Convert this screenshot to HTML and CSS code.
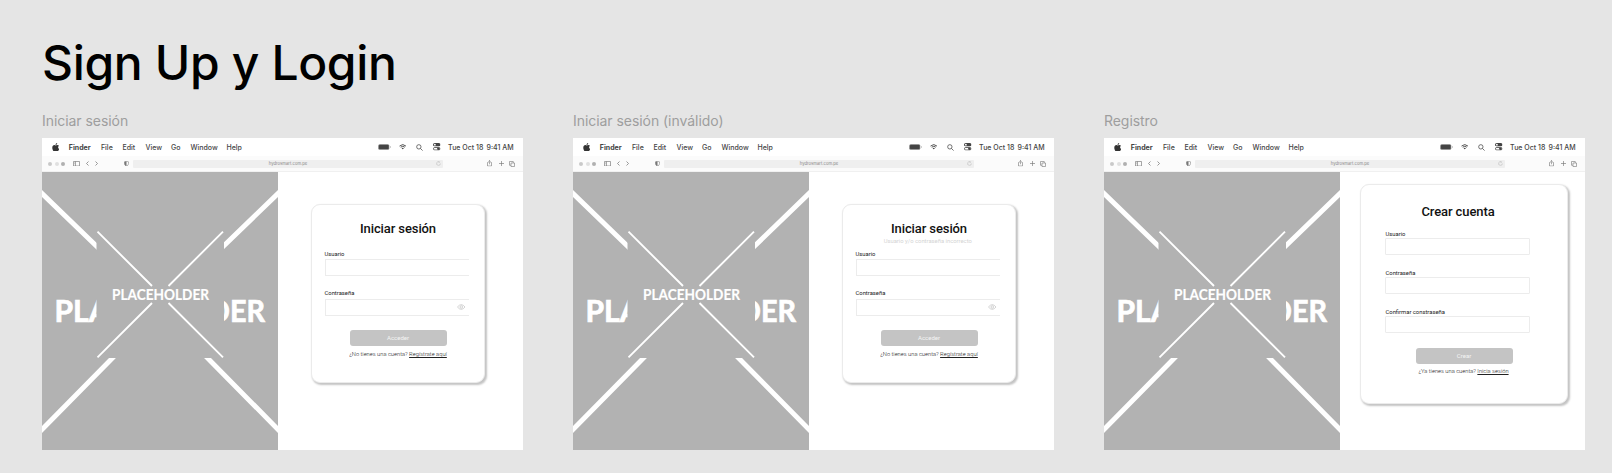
FILE: index.html
```html
<!DOCTYPE html>
<html lang="es">
<head>
<meta charset="utf-8">
<title>Sign Up y Login</title>
<link rel="stylesheet" href="styles.css">
</head>
<body>
<svg class="defs" width="0" height="0">
  <symbol id="apple" viewBox="0 0 16 18"><path d="M11 0c.2 2-1.500 4-3.400 4C7.400 2.200 9 .3 11 0zM8 5c.8 0 1.700-.9 3.300-.9 1.500 0 2.800.7 3.600 1.900-2.800 1.700-2.400 5.500.5 6.700C14.700 15 13 18 11.300 18c-1.200 0-1.700-.7-3.200-.7S6 18 4.900 18C3 18 .6 13.700.6 10c0-3.700 2.200-5.800 4.300-5.800C6.300 4.200 7.300 5 8 5z"/></symbol>
  <symbol id="battery" viewBox="0 0 26 12"><rect x=".5" y=".5" width="22" height="11" rx="3" fill="#777"/><rect x="2" y="2" width="19" height="8" rx="1.500"/><path d="M24 4q2 2 0 4z"/></symbol>
  <symbol id="wifi" viewBox="0 0 16 12"><path d="M1 4.500Q8-2 15 4.500M3.500 7Q8 3 12.500 7" fill="none" stroke="currentColor" stroke-width="2"/><path d="M5.500 9Q8 7 10.500 9L8 12z"/></symbol>
  <symbol id="search" viewBox="0 0 16 16"><g fill="none" stroke="currentColor" stroke-width="1.700"><circle cx="6.500" cy="6.500" r="5"/><path d="M10.300 10.300l4.700 4.700"/></g></symbol>
  <symbol id="control" viewBox="0 0 16 16"><rect x="0" y="0" width="16" height="7" rx="3.500"/><circle cx="4" cy="3.500" r="2" fill="#fff"/><rect x="1" y="9.500" width="14" height="5.500" rx="2.700" fill="none" stroke="currentColor" stroke-width="1.800"/><circle cx="11.500" cy="12.200" r="2.800"/></symbol>
  <symbol id="sidebar" viewBox="0 0 14 11"><path d="M1 1h12v9H1zM5 1v9M2.500 3.500h1M2.500 5.500h1" fill="none" stroke="currentColor" stroke-width="1.300"/></symbol>
  <symbol id="back" viewBox="0 0 6 10"><path d="M5 1L1 5l4 4" fill="none" stroke="currentColor" stroke-width="1.500"/></symbol>
  <symbol id="next" viewBox="0 0 6 10"><path d="M1 1l4 4-4 4" fill="none" stroke="currentColor" stroke-width="1.500"/></symbol>
  <symbol id="shield" viewBox="0 0 10 11"><path d="M5 .6l4 1v4q0 3-4 4.800Q1 8.600 1 5.600v-4z" fill="none" stroke="currentColor"/><path d="M5 .6v9.800Q1 8.600 1 5.600v-4z"/></symbol>
  <symbol id="reload" viewBox="0 0 12 12"><path d="M10.500 6A4.500 4.500 0 1 1 8 2M6 .3L8.500 2 7 4.500" fill="none" stroke="currentColor"/></symbol>
  <symbol id="share" viewBox="0 0 10 13"><path d="M3 5H1v7h8V5H7M5 8.500V1M2.700 3.200L5 1l2.300 2.200" fill="none" stroke="currentColor" stroke-width="1.200"/></symbol>
  <symbol id="plus" viewBox="0 0 10 10"><path d="M5 0v10M0 5h10" stroke="currentColor" stroke-width="1.300"/></symbol>
  <symbol id="tabs" viewBox="0 0 12 12"><path d="M4 4h7v7H4zM4 8.500H1V1h7.500v3" fill="none" stroke="currentColor" stroke-width="1.200" stroke-linejoin="round"/></symbol>
  <symbol id="eye" viewBox="0 0 18 12"><g fill="none" stroke="currentColor" stroke-width="1.300"><path d="M1 6q8-10 16 0Q9 16 1 6z"/><circle cx="9" cy="6" r="2.700"/></g></symbol>
</svg>

<h1 class="title">Sign Up y Login</h1>
<main class="frames">
  <section class="frame">
    <h2 class="frame-name">Iniciar sesión</h2>
    <div class="screen">
      <div class="menubar">
        <svg class="i-apple"><use href="#apple"/></svg>
        <b>Finder</b><span>File</span><span>Edit</span><span>View</span><span>Go</span><span>Window</span><span>Help</span>
        <svg class="i-battery"><use href="#battery"/></svg><svg class="i-wifi"><use href="#wifi"/></svg><svg class="i-search"><use href="#search"/></svg><svg class="i-control"><use href="#control"/></svg>
        <span class="date">Tue Oct 18</span><span class="time">9:41 AM</span>
      </div>
      <div class="toolbar">
        <div class="dots"><i></i><i class="pale"></i><i class="dark"></i></div>
        <svg class="i-sidebar"><use href="#sidebar"/></svg><svg class="i-chev"><use href="#back"/></svg><svg class="i-chev"><use href="#next"/></svg><svg class="i-shield"><use href="#shield"/></svg>
        <div class="url"><span>hydrosmart.com.pe</span><svg class="i-reload"><use href="#reload"/></svg></div>
        <svg class="i-share"><use href="#share"/></svg><svg class="i-plus"><use href="#plus"/></svg><svg class="i-tabs"><use href="#tabs"/></svg>
      </div>
      <div class="content">
        <svg class="art" viewBox="0 0 236 278">
          <path class="thick" d="M-4 17.600L58 77.600M240 17.600L178 77.600M75.400 181L-4 261.500M160.600 181L240 261.500"/>
          <text class="art-big" x="12.500" y="150.300" textLength="55" lengthAdjust="spacingAndGlyphs">PLA</text>
          <text class="art-big" x="166" y="150.300" textLength="57" lengthAdjust="spacingAndGlyphs">DER</text>
          <rect class="art-cover" x="54.500" y="59" width="127.500" height="127"/>
          <path class="thin" d="M55.500 59.700L110 114M181 59.700L126.500 114M110 131L55.500 185.300M126.500 131L181 185.300"/>
          <text class="art-small" x="70" y="127.700" textLength="97" lengthAdjust="spacingAndGlyphs">PLACEHOLDER</text>
        </svg>
        <div class="card login">
          <h3>Iniciar sesión</h3>
          <p class="error"></p>
          <label>Usuario</label><div class="input"></div>
          <label>Contraseña</label><div class="input"><svg class="i-eye"><use href="#eye"/></svg></div>
          <div class="button">Acceder</div>
          <p class="hint">¿No tienes una cuenta? <u>Regístrate aquí</u></p>
        </div>
      </div>
    </div>
  </section>

  <section class="frame">
    <h2 class="frame-name">Iniciar sesión (inválido)</h2>
    <div class="screen">
      <div class="menubar">
        <svg class="i-apple"><use href="#apple"/></svg>
        <b>Finder</b><span>File</span><span>Edit</span><span>View</span><span>Go</span><span>Window</span><span>Help</span>
        <svg class="i-battery"><use href="#battery"/></svg><svg class="i-wifi"><use href="#wifi"/></svg><svg class="i-search"><use href="#search"/></svg><svg class="i-control"><use href="#control"/></svg>
        <span class="date">Tue Oct 18</span><span class="time">9:41 AM</span>
      </div>
      <div class="toolbar">
        <div class="dots"><i></i><i class="pale"></i><i class="dark"></i></div>
        <svg class="i-sidebar"><use href="#sidebar"/></svg><svg class="i-chev"><use href="#back"/></svg><svg class="i-chev"><use href="#next"/></svg><svg class="i-shield"><use href="#shield"/></svg>
        <div class="url"><span>hydrosmart.com.pe</span><svg class="i-reload"><use href="#reload"/></svg></div>
        <svg class="i-share"><use href="#share"/></svg><svg class="i-plus"><use href="#plus"/></svg><svg class="i-tabs"><use href="#tabs"/></svg>
      </div>
      <div class="content">
        <svg class="art" viewBox="0 0 236 278">
          <path class="thick" d="M-4 17.600L58 77.600M240 17.600L178 77.600M75.400 181L-4 261.500M160.600 181L240 261.500"/>
          <text class="art-big" x="12.500" y="150.300" textLength="55" lengthAdjust="spacingAndGlyphs">PLA</text>
          <text class="art-big" x="166" y="150.300" textLength="57" lengthAdjust="spacingAndGlyphs">DER</text>
          <rect class="art-cover" x="54.500" y="59" width="127.500" height="127"/>
          <path class="thin" d="M55.500 59.700L110 114M181 59.700L126.500 114M110 131L55.500 185.300M126.500 131L181 185.300"/>
          <text class="art-small" x="70" y="127.700" textLength="97" lengthAdjust="spacingAndGlyphs">PLACEHOLDER</text>
        </svg>
        <div class="card login">
          <h3>Iniciar sesión</h3>
          <p class="error">Usuario y/o contraseña incorrecto</p>
          <label>Usuario</label><div class="input"></div>
          <label>Contraseña</label><div class="input"><svg class="i-eye"><use href="#eye"/></svg></div>
          <div class="button">Acceder</div>
          <p class="hint">¿No tienes una cuenta? <u>Regístrate aquí</u></p>
        </div>
      </div>
    </div>
  </section>

  <section class="frame">
    <h2 class="frame-name">Registro</h2>
    <div class="screen">
      <div class="menubar">
        <svg class="i-apple"><use href="#apple"/></svg>
        <b>Finder</b><span>File</span><span>Edit</span><span>View</span><span>Go</span><span>Window</span><span>Help</span>
        <svg class="i-battery"><use href="#battery"/></svg><svg class="i-wifi"><use href="#wifi"/></svg><svg class="i-search"><use href="#search"/></svg><svg class="i-control"><use href="#control"/></svg>
        <span class="date">Tue Oct 18</span><span class="time">9:41 AM</span>
      </div>
      <div class="toolbar">
        <div class="dots"><i></i><i class="pale"></i><i class="dark"></i></div>
        <svg class="i-sidebar"><use href="#sidebar"/></svg><svg class="i-chev"><use href="#back"/></svg><svg class="i-chev"><use href="#next"/></svg><svg class="i-shield"><use href="#shield"/></svg>
        <div class="url"><span>hydrosmart.com.pe</span><svg class="i-reload"><use href="#reload"/></svg></div>
        <svg class="i-share"><use href="#share"/></svg><svg class="i-plus"><use href="#plus"/></svg><svg class="i-tabs"><use href="#tabs"/></svg>
      </div>
      <div class="content">
        <svg class="art" viewBox="0 0 236 278">
          <path class="thick" d="M-4 17.600L58 77.600M240 17.600L178 77.600M75.400 181L-4 261.500M160.600 181L240 261.500"/>
          <text class="art-big" x="12.500" y="150.300" textLength="55" lengthAdjust="spacingAndGlyphs">PLA</text>
          <text class="art-big" x="166" y="150.300" textLength="57" lengthAdjust="spacingAndGlyphs">DER</text>
          <rect class="art-cover" x="54.500" y="59" width="127.500" height="127"/>
          <path class="thin" d="M55.500 59.700L110 114M181 59.700L126.500 114M110 131L55.500 185.300M126.500 131L181 185.300"/>
          <text class="art-small" x="70" y="127.700" textLength="97" lengthAdjust="spacingAndGlyphs">PLACEHOLDER</text>
        </svg>
        <div class="card register">
          <h3>Crear cuenta</h3>
          <label>Usuario</label><div class="input"></div>
          <label>Contraseña</label><div class="input"></div>
          <label>Confirmar constraseña</label><div class="input"></div>
          <div class="button">Crear</div>
          <p class="hint">¿Ya tienes una cuenta? <u>Inicia sesión</u></p>
        </div>
      </div>
    </div>
  </section>
</main>
</body>
</html>
```
FILE: styles.css
```css
* { box-sizing: border-box; }
body { margin: 0; height: 473px; overflow: hidden; background: #e5e5e5; font-family: Inter, "Liberation Sans", sans-serif; padding: 34px 0 0 42px; }
h1, h2, h3, p { margin: 0; }
svg { display: block; fill: currentColor; }
.defs { position: absolute; }
.title { height: 75px; line-height: 58px; font-size: 48px; font-weight: 500; letter-spacing: -0.350px; color: #000; white-space: nowrap; }
.frames { display: flex; gap: 50px; }
.frame { width: 481px; flex: none; }
.frame-name { height: 29px; line-height: 23px; font-size: 14px; font-weight: 400; color: #9e9e9e; letter-spacing: -0.050px; }
.screen { height: 312px; background: #fff; }

.menubar { display: grid; grid-template-columns: 17px 32.200px 21.500px 23px 25.500px 19.500px 36px 151.300px 21px 17.300px 17px 15px 38.500px 1fr; align-items: center; height: 18px; padding-left: 9.800px; font-size: 7px; font-weight: 500; color: #444; white-space: nowrap; }
.menubar b { font-weight: 700; }
.i-apple { width: 7.500px; height: 8.500px; color: #333; }
.i-battery { width: 13px; height: 6px; }
.i-wifi { width: 7.500px; height: 5.500px; }
.i-search { width: 7px; height: 7px; }
.i-control { width: 7.500px; height: 7.500px; }

.toolbar { display: flex; align-items: center; height: 16px; padding: 0 7.700px 0 6.200px; background: #fbfbfb; border-bottom: 1px solid #f0f0f0; color: #777; }
.dots { display: flex; gap: 2.500px; width: 24.500px; }
.dots i { width: 4px; height: 4px; border-radius: 50%; background: #c9c9c9; }
.dots .pale { background: #e0e0e0; }
.dots .dark { background: #b0b0b0; }
.i-sidebar { width: 7px; height: 5.500px; margin-right: 6px; }
.i-chev { width: 3px; height: 5px; margin-right: 6.200px; }
.i-shield { width: 5px; height: 5.500px; margin: 0 4px 0 19.500px; }
.url { display: flex; align-items: center; flex: none; width: 310px; height: 8px; border-radius: 1px; background: #efefef; font-size: 4.200px; line-height: 8px; color: #888; }
.url span { margin-left: auto; padding-left: 8px; }
.i-reload { width: 5px; height: 5px; margin: 0 2px 0 auto; color: #aaa; }
.i-share { width: 5px; height: 6.500px; margin-left: auto; }
.i-plus { width: 5px; height: 5px; margin: 0 5.500px 0 6.700px; }
.i-tabs { width: 6px; height: 6px; }

.content { display: flex; align-items: flex-start; height: 278px; }
.art { width: 236px; height: 278px; flex: none; background: #b2b2b2; }
.thick { fill: none; stroke: #fff; stroke-width: 4.900px; }
.thin { fill: none; stroke: #fff; stroke-width: 1.900px; }
.art-cover { fill: #b2b2b2; }
.art-big, .art-small { font-family: Lato, sans-serif; font-weight: 700; fill: #fff; stroke: #fff; }
.art-big { font-size: 30px; stroke-width: .7px; }
.art-small { font-size: 14.800px; stroke-width: .15px; }

.card { flex: none; border: 1px solid #ebebeb; border-radius: 9px; background: #fff; box-shadow: 1.500px 1.500px 2px #c4c4c4; font-family: Roboto, sans-serif; white-space: nowrap; }
.card h3 { font-size: 13px; font-weight: 500; line-height: 16px; letter-spacing: -0.100px; text-align: center; color: #111; }
.card label { display: block; height: 8px; font-size: 5.850px; line-height: 8px; color: #222; }
.input { display: flex; align-items: center; justify-content: flex-end; width: 145px; height: 17px; margin-bottom: 14.500px; border: 1px solid #ececec; }
.button { width: 97px; height: 16px; border-radius: 3px; background: #c4c4c4; font-size: 6px; line-height: 16px; text-align: center; color: #f4f4f4; }
.hint { font-size: 5.750px; font-weight: 300; line-height: 8px; text-align: center; color: #222; }

.login { width: 174px; height: 179px; margin: 32px 0 0 33px; padding: 16px 0 0 12.500px; }
.login h3 { width: 147px; }
.error { height: 13.500px; padding-right: 15px; font-size: 5.850px; line-height: 8px; color: #d4d4d4; text-align: center; }
.login label { height: 8.500px; line-height: 7px; }
.login .input { width: 144.500px; margin-bottom: 14px; border-right: 0; }
.i-eye { width: 8.500px; height: 6px; margin-right: 4px; color: #bbb; }
.login .button { margin-left: 25px; margin-top: 14.500px; }
.login .hint { width: 147px; margin-top: 4px; }

.register { width: 208px; height: 220px; margin: 12px 0 0 20px; padding: 18.500px 0 0 24px; }
.register h3 { width: 146px; height: 26px; }
.register .input { margin-bottom: 14px; border-radius: 1px; }
.register label { height: 8px; line-height: 8px; padding-left: .5px; }
.register .button { margin: 15px 0 0 30.500px; }
.register .hint { width: 157px; margin-top: 3px; }
```
